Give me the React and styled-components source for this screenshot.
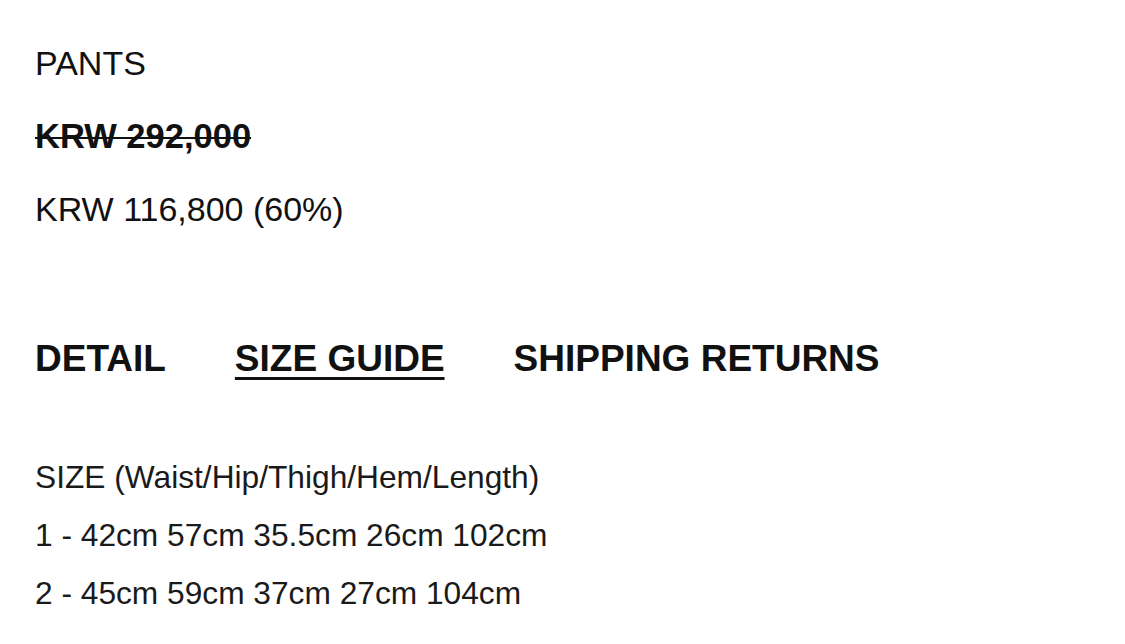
import React from "react";
import styled, { createGlobalStyle } from "styled-components";

const GlobalStyle = createGlobalStyle`
  body {
    margin: 0;
    background: #fff;
    font-family: "Liberation Sans", Arial, sans-serif;
    color: #111;
  }
`;

const tabs = [
  { label: "DETAIL", active: false },
  { label: "SIZE GUIDE", active: true },
  { label: "SHIPPING RETURNS", active: false },
];

const sizes = [
  "SIZE (Waist/Hip/Thigh/Hem/Length)",
  "1 - 42cm 57cm 35.5cm 26cm 102cm",
  "2 - 45cm 59cm 37cm 27cm 104cm",
];

function App() {
  return (
    <Page>
      <GlobalStyle />
      <Info>
        <Line>PANTS</Line>
        <Line $old>KRW 292,000</Line>
        <Line>KRW 116,800 (60%)</Line>
      </Info>
      <Tabs>
        {tabs.map((t) => (
          <Tab key={t.label} $active={t.active}>
            {t.label}
          </Tab>
        ))}
      </Tabs>
      <SizeList>
        {sizes.map((s) => (
          <SizeRow key={s}>{s}</SizeRow>
        ))}
      </SizeList>
    </Page>
  );
}

export default App;

const Page = styled.div`
  padding: 27px 35px 0;
`;

const Info = styled.div`
  display: flex;
  flex-direction: column;
`;

const Line = styled.div`
  font-size: ${(p) => (p.$old ? "34.5px" : "34px")};
  line-height: 73px;
  font-weight: ${(p) => (p.$old ? 700 : 400)};
  text-decoration: ${(p) => (p.$old ? "line-through" : "none")};
  text-decoration-thickness: 2px;
  white-space: nowrap;
`;

const Tabs = styled.div`
  display: flex;
  gap: 69px;
  margin-top: 88px;
`;

const Tab = styled.div`
  font-size: 37px;
  line-height: 50px;
  font-weight: 700;
  white-space: nowrap;
  cursor: pointer;
  text-decoration: ${(p) => (p.$active ? "underline" : "none")};
  text-decoration-thickness: 3px;
  text-underline-offset: 6px;
`;

const SizeList = styled.div`
  display: flex;
  flex-direction: column;
  margin-top: 64px;
`;

const SizeRow = styled.div`
  font-size: 31.7px;
  line-height: 58px;
  color: #1a1a1a;
  white-space: nowrap;
`;
